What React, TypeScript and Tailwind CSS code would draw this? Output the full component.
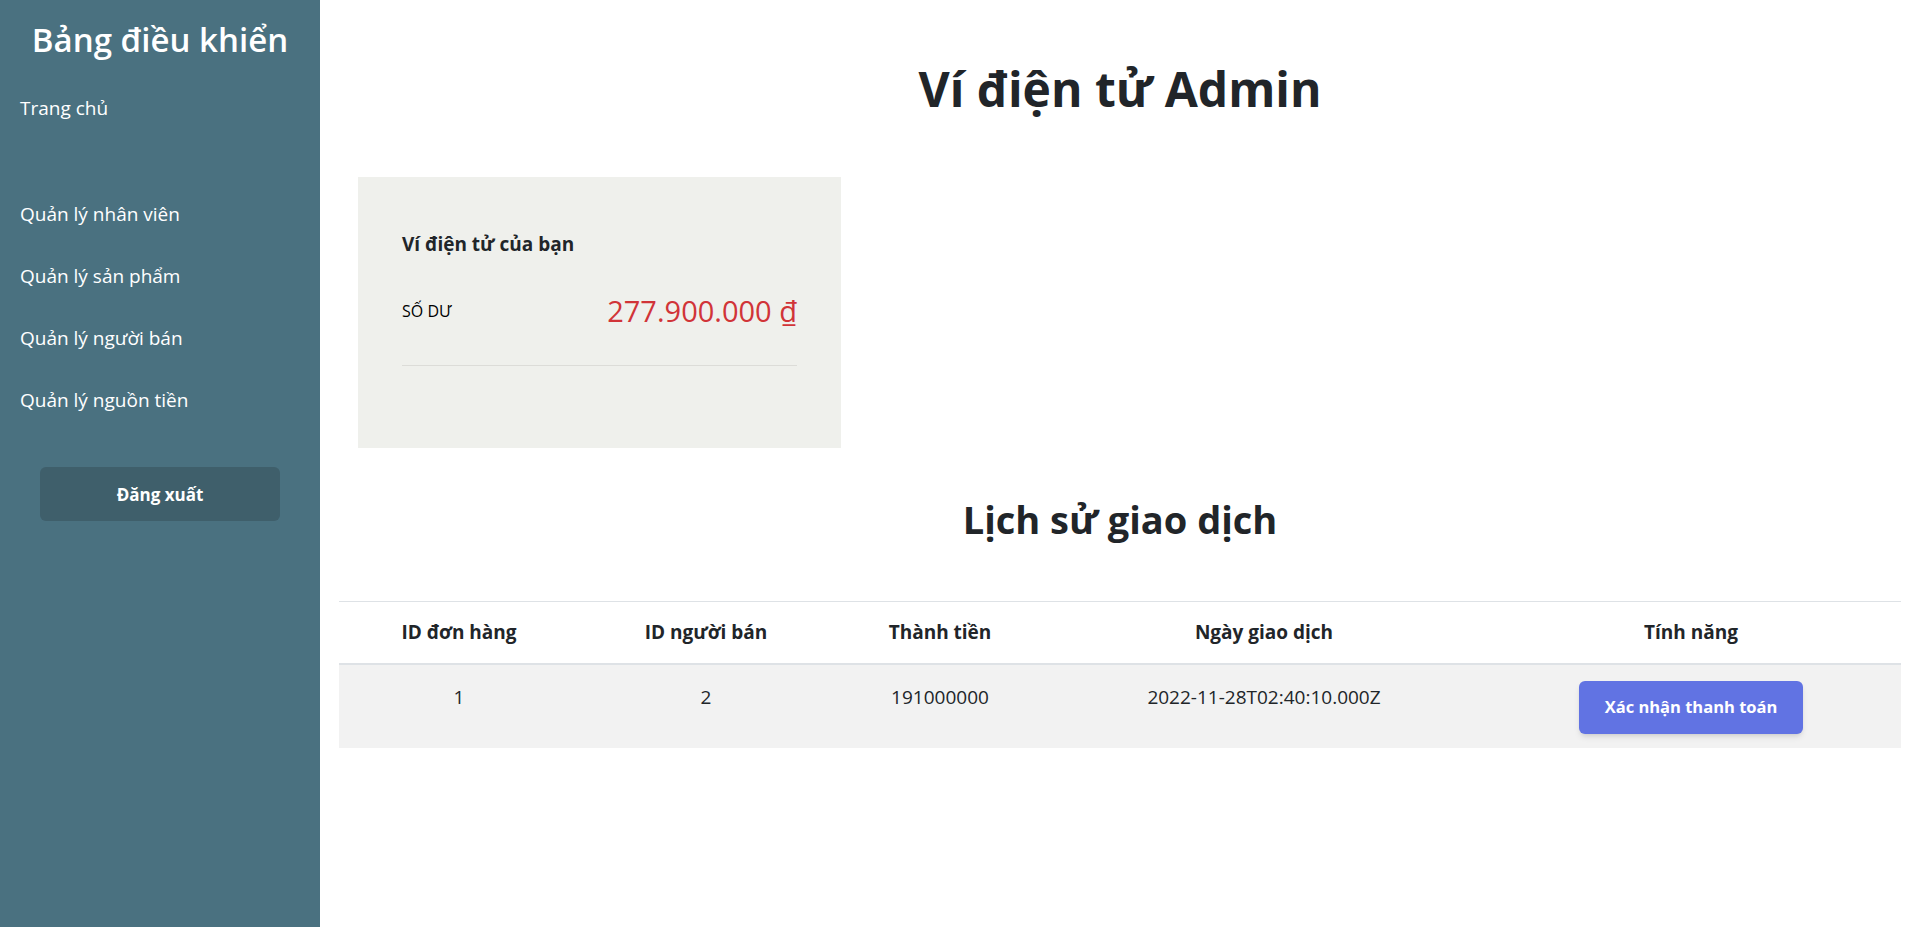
import React from "react";

const menuItems = [
  "Quản lý nhân viên",
  "Quản lý sản phẩm",
  "Quản lý người bán",
  "Quản lý nguồn tiền",
];

const transactions = [
  {
    orderId: 1,
    sellerId: 2,
    amount: 191000000,
    date: "2022-11-28T02:40:10.000Z",
  },
];

export default function App() {
  return (
    <div
      className="flex min-h-[927px] w-full bg-white text-[#212529]"
      style={{ fontFamily: '"Open Sans", "Noto Sans", sans-serif' }}
    >
      {/* Sidebar */}
      <aside className="flex w-[320px] shrink-0 flex-col bg-[#4a7180] text-white">
        <div className="flex h-[77px] items-start justify-center pt-[19px]">
          <h2 className="text-[33px] font-semibold leading-tight">Bảng điều khiển</h2>
        </div>
        <a className="flex h-[62px] items-center px-5 text-[19px]">Trang chủ</a>
        <div className="h-[44px]" />
        {menuItems.map((item) => (
          <a key={item} className="flex h-[62px] items-center px-5 text-[19px]">
            {item}
          </a>
        ))}
        <button className="mx-10 mt-[36px] h-[54px] rounded-md bg-[#3f5f6b] pt-[2px] text-[17px] font-bold text-white">
          Đăng xuất
        </button>
      </aside>

      {/* Main */}
      <main className="flex flex-1 flex-col pl-[19px] pr-[10px]">
        <h1 className="mt-[60px] text-center text-[48px] font-bold leading-[1.2]">
          Ví điện tử Admin
        </h1>

        <div className="ml-[19px] mt-[59px] w-[483px] bg-[#eff0ec] px-[44px] pb-[82px] pt-[53px]">
          <h5 className="text-[19px] font-bold leading-normal">Ví điện tử của bạn</h5>
          <div className="mt-[36px] flex items-center justify-between">
            <span className="text-[16px] text-black">SỐ DƯ</span>
            <span className="text-[29px] leading-[1.2] text-[#d13438]">277.900.000 ₫</span>
          </div>
          <hr className="mt-[36px] border-t border-[#dcdcd8]" />
        </div>

        <h2 className="mt-[48px] text-center text-[38px] font-bold leading-[1.25]">
          Lịch sử giao dịch
        </h2>

        <table className="mt-[58px] w-full table-fixed border-collapse text-[19px]">
          <colgroup>
            <col className="w-[240px]" />
            <col className="w-[254px]" />
            <col className="w-[214px]" />
            <col className="w-[434px]" />
            <col />
          </colgroup>
          <thead>
            <tr className="h-[62px] border-y-2 border-t border-[#dee2e6]">
              <th className="font-bold">ID đơn hàng</th>
              <th className="font-bold">ID người bán</th>
              <th className="font-bold">Thành tiền</th>
              <th className="font-bold">Ngày giao dịch</th>
              <th className="font-bold">Tính năng</th>
            </tr>
          </thead>
          <tbody>
            {transactions.map((t) => (
              <tr key={t.orderId} className="bg-[#f2f2f2] align-top">
                <td className="pt-[18px] text-center">{t.orderId}</td>
                <td className="pt-[18px] text-center">{t.sellerId}</td>
                <td className="pt-[18px] text-center">{t.amount}</td>
                <td className="pt-[18px] text-center">{t.date}</td>
                <td className="pb-[14px] pt-[16px] text-center">
                  <button className="h-[53px] w-[224px] rounded-md bg-[#6173e3] text-[16.5px] font-bold text-white shadow-md">
                    Xác nhận thanh toán
                  </button>
                </td>
              </tr>
            ))}
          </tbody>
        </table>
      </main>
    </div>
  );
}
